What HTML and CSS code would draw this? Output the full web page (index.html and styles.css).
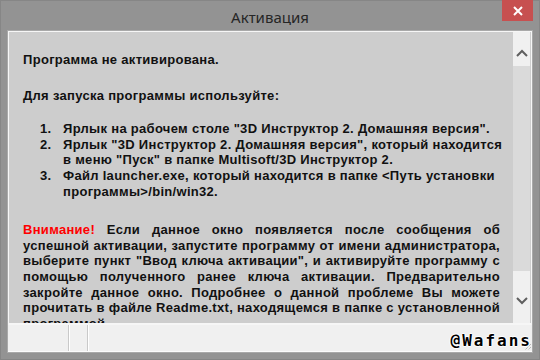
FILE: index.html
```html
<!DOCTYPE html>
<html lang="ru">
<head>
  <meta charset="UTF-8">
  <meta name="viewport" content="width=device-width,initial-scale=1.0">
  <title>Активация</title>
  <link rel="stylesheet" href="styles.css">
</head>
<body>
  <div class="window">
    <!-- заголовок окна -->
    <div class="titlebar">
      <span class="title">Активация</span>
      <div class="close-btn">
        <svg width="10" height="10" viewBox="0 0 10 10">
          <path d="M1 1 L9 9 M9 1 L1 9" stroke="#fff" stroke-width="2" fill="none"/>
        </svg>
      </div>
    </div>

    <div class="client">
      <div class="editor">
        <div class="text">
          <p>Программа не активирована.</p>
          <p>Для запуска программы используйте:</p>
          <ol class="steps">
            <li><span class="num">1.</span><span>Ярлык на рабочем столе "3D Инструктор 2. Домашняя версия".</span></li>
            <li><span class="num">2.</span><span>Ярлык "3D Инструктор 2. Домашняя версия", который находится в меню "Пуск" в папке Multisoft/3D Инструктор 2.</span></li>
            <li><span class="num">3.</span><span>Файл launcher.exe, который находится в папке &lt;Путь установки программы&gt;/bin/win32.</span></li>
          </ol>
          <p class="note"><span class="warn">Внимание!</span> Если данное окно появляется после сообщения об успешной активации, запустите программу от имени администратора, выберите пункт "Ввод ключа активации", и активируйте программу с помощью полученного ранее ключа активации. Предварительно закройте данное окно. Подробнее о данной проблеме Вы можете прочитать в файле Readme.txt, находящемся в папке с установленной программой.</p>
        </div>
        <div class="scrollbar">
          <div class="sb-btn sb-up">
            <svg width="12" height="8" viewBox="0 0 12 8"><path d="M1 7 L6 2 L11 7" stroke="#5f5f5f" stroke-width="2" fill="none"/></svg>
          </div>
          <div class="sb-thumb"></div>
          <div class="sb-btn sb-down">
            <svg width="12" height="8" viewBox="0 0 12 8"><path d="M1 1 L6 6 L11 1" stroke="#5f5f5f" stroke-width="2" fill="none"/></svg>
          </div>
        </div>
      </div>

      <!-- строка состояния -->
      <div class="statusbar">
        <div class="panel p1"></div>
        <div class="panel p2"></div>
        <div class="panel p3"></div>
        <span class="mark">@Wafans</span>
        <svg class="grip" width="9" height="9" viewBox="0 0 9 9">
          <path d="M8 2 L2 8 M8 5 L5 8" stroke="#a0a0a0" stroke-width="1" stroke-dasharray="1 1" fill="none"/>
        </svg>
      </div>
    </div>
  </div>
</body>
</html>
```

FILE: styles.css
```css
body {
  margin: 0;
  padding: 0;
  background: #939393;
  font-family: 'Liberation Sans', Arial, sans-serif;
}
.window {
  width: 540px;
  height: 360px;
  box-sizing: border-box;
  border: 1px solid #868686;
  background: #939393;
  display: flex;
  flex-direction: column;
}

/* заголовок */
.titlebar {
  height: 29px;
  position: relative;
  display: flex;
  justify-content: center;
  align-items: center;
}
.title {
  font-family: 'Noto Sans', 'Open Sans', sans-serif;
  font-size: 15px;
  color: #262626;
  margin-top: 2px;
}
.close-btn {
  position: absolute;
  top: -1px;
  right: 6px;
  width: 31px;
  height: 21px;
  background: #c75050;
  display: flex;
  justify-content: center;
  align-items: center;
}

/* клиентская область */
.client {
  flex: 1;
  margin: 0 6px 6px 6px;
  border: 1px solid #a9a9a9;
  display: flex;
  flex-direction: column;
  min-height: 0;
}
.editor {
  height: 291px;
  border: 1px solid #f6f6f6;
  border-bottom-width: 2px;
  display: flex;
  background: #cdcdcd;
}
.text {
  flex: 1;
  overflow: hidden;
  padding: 20px 13px 0 14px;
  font-size: 13px;
  font-weight: bold;
  line-height: 15.6px;
  letter-spacing: 0.3px;
  color: #111;
}
.text p {
  margin: 0 0 20px 0;
}
.steps {
  list-style: none;
  margin: -2px -10px 23px 0;
  padding: 0 0 0 17px;
}
.steps li {
  display: flex;
}
.steps .num {
  flex: 0 0 23px;
}
.note {
  text-align: justify;
}
.warn {
  color: #ff0000;
}

/* полоса прокрутки */
.scrollbar {
  width: 17px;
  margin-right: 1px;
  display: flex;
  flex-direction: column;
  background: #f0f0f0;
}
.sb-btn {
  display: flex;
  justify-content: center;
}
.sb-up {
  height: 34px;
  align-items: flex-end;
}
.sb-up svg {
  margin-bottom: 9px;
}
.sb-thumb {
  height: 205px;
  background: #dadada;
}
.sb-down {
  flex: 1;
  align-items: flex-start;
}
.sb-down svg {
  margin-top: 26px;
}

/* строка состояния */
.statusbar {
  flex: 1;
  display: flex;
  position: relative;
  background: #f0f0f0;
  border-bottom: 1px solid #fbfbfb;
}
.panel {
  height: 100%;
}
.p1 {
  width: 60px;
  border-right: 1px solid #c9c9c9;
}
.p2 {
  width: 17px;
  border-left: 1px solid #fff;
  border-right: 1px solid #c9c9c9;
}
.p3 {
  flex: 1;
  border-left: 1px solid #fff;
}
.mark {
  position: absolute;
  right: 0;
  bottom: 1px;
  font-family: 'DejaVu Sans Mono', monospace;
  font-weight: bold;
  font-size: 16px;
  letter-spacing: 2px;
  color: #000;
  text-shadow: 1px 0 #fff, -1px 0 #fff, 0 1px #fff, 0 -1px #fff;
}
.grip {
  position: absolute;
  right: 0;
  bottom: 0;
}
```
